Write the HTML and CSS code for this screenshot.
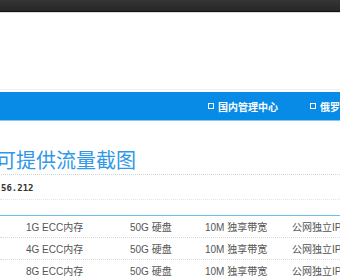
FILE: index.html
```html
<!DOCTYPE html>
<html lang="zh">
<head>
<meta charset="utf-8">
<link rel="stylesheet" href="styles.css">
</head>
<body>
<div class="topbar"></div>
<div class="header"></div>
<nav class="nav">
  <a class="nav-item"><span class="sq"></span>国内管理中心</a>
  <a class="nav-item"><span class="sq"></span>俄罗斯管理中心</a>
</nav>
<main class="content">
  <h2 class="title">可提供流量截图</h2>
  <div class="ip">56.212</div>
  <div class="table">
    <div class="row"><span>1G ECC内存</span><span>50G 硬盘</span><span>10M 独享带宽</span><span>公网独立IP</span></div>
    <div class="row"><span>4G ECC内存</span><span>50G 硬盘</span><span>10M 独享带宽</span><span>公网独立IP</span></div>
    <div class="row"><span>8G ECC内存</span><span>50G 硬盘</span><span>10M 独享带宽</span><span>公网独立IP</span></div>
  </div>
</main>
</body>
</html>
```
FILE: styles.css
```css
html, body {
  margin: 0;
  padding: 0;
  background: #fff;
  overflow: hidden;
}
body {
  font-family: "Liberation Sans", "Noto Sans CJK SC", sans-serif;
  width: 340px;
}
.topbar {
  height: 11px;
  background: linear-gradient(#353535, #272727);
  border-bottom: 1px solid #141414;
  box-shadow: 0 1px 0 #d8d8d8;
}
.header {
  height: 77px;
  border-bottom: 1px solid #efefef;
  margin-bottom: 2px;
}
.nav {
  height: 28px;
  background: #078be6;
  border-bottom: 1px solid #86c8f4;
  display: flex;
  align-items: center;
  gap: 32px;
  padding-left: 208px;
  white-space: nowrap;
  overflow: hidden;
}
.nav-item {
  display: flex;
  align-items: center;
  gap: 4px;
  color: #fff;
  font-size: 10px;
  font-weight: bold;
  font-family: "Noto Sans CJK SC", sans-serif;
  flex: none;
}
.sq {
  width: 4px;
  height: 4px;
  border: 1px solid #fff;
  display: inline-block;
}
.content {
  padding-top: 27px;
}
.title {
  margin: 0 0 0 -4px;
  font-size: 20px;
  line-height: 24px;
  font-weight: normal;
  color: #2f98e8;
  font-family: "Noto Sans CJK SC", sans-serif;
  padding-bottom: 2px;
  border-bottom: 1px dotted #d6d6d6;
  white-space: nowrap;
}
.ip {
  font-family: "DejaVu Sans Mono", monospace;
  font-size: 9px;
  font-weight: bold;
  color: #333;
  line-height: 14px;
  padding: 6px 0 4px 1px;
  border-bottom: 1px dotted #e4e4e4;
  margin-bottom: 15px;
}
.table {
  border-top: 1px solid #6dbdf1;
}
.row {
  display: grid;
  grid-template-columns: 104px 75px 87px 1fr;
  padding-left: 26px;
  height: 21px;
  align-items: center;
  border-bottom: 1px dotted #d8d8d8;
  font-size: 10px;
  color: #555;
  white-space: nowrap;
}
```
